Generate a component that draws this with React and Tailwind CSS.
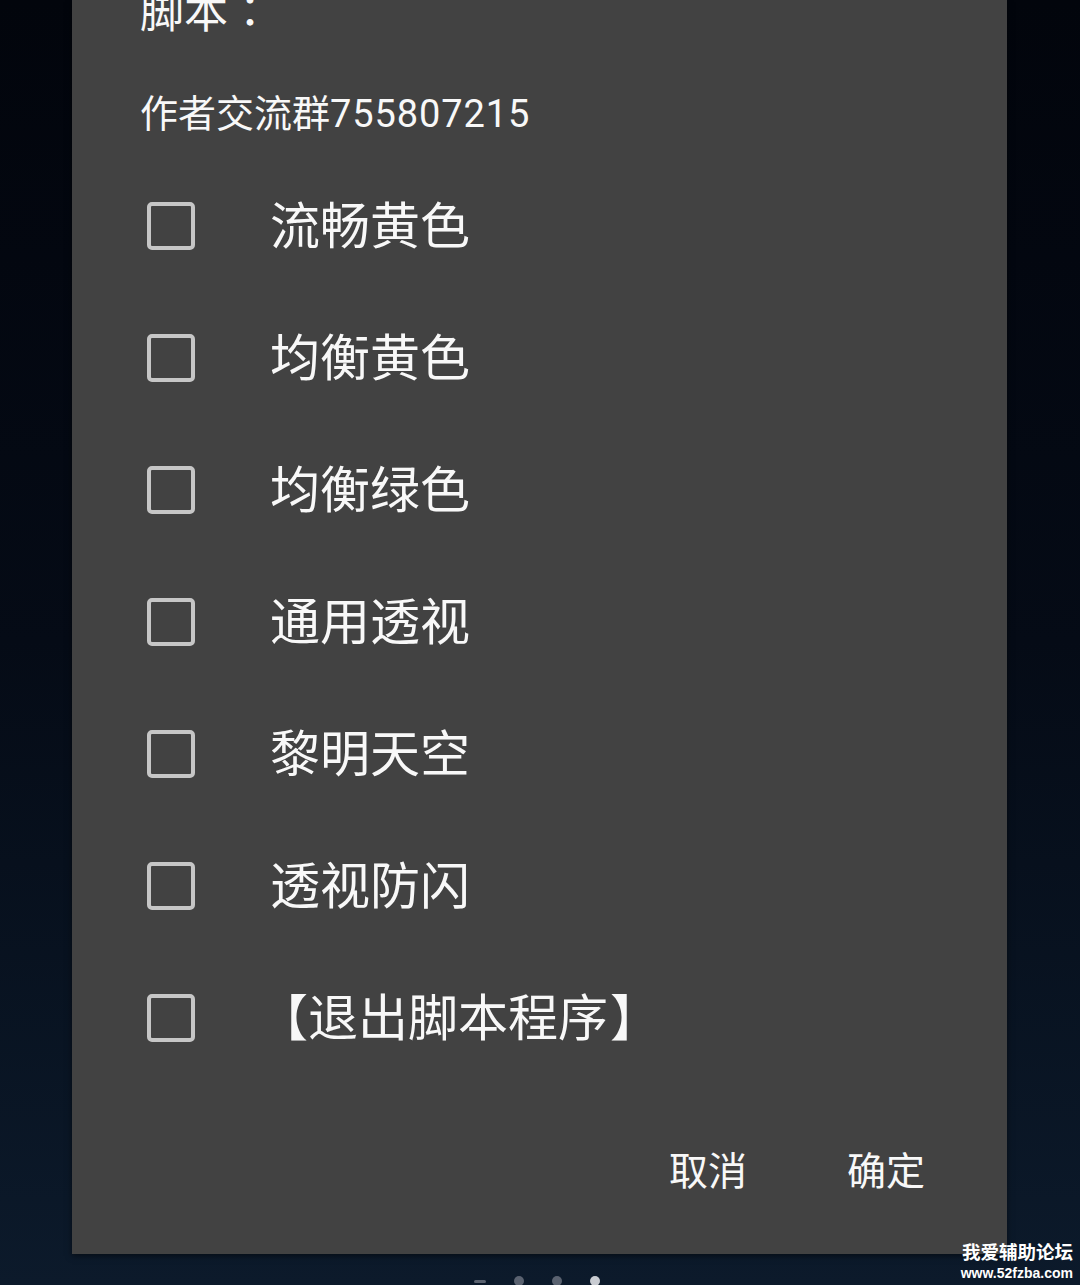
const options = [
  "流畅黄色",
  "均衡黄色",
  "均衡绿色",
  "通用透视",
  "黎明天空",
  "透视防闪",
];

const cjk = { fontFamily: 'Roboto, "Noto Sans CJK SC", "Noto Sans", sans-serif' };

function Row({ children }) {
  return (
    <div className="flex h-[132px] items-center">
      <div className="ml-[7px] h-[48px] w-[48px] rounded-[5px] border-[4px] border-[#c6c6c6]" />
      <span className="ml-[75px] pt-[2px] text-[50px] leading-[50px] text-[#f8f8f8]">{children}</span>
    </div>
  );
}

export default function App() {
  return (
    <div
      className="relative h-[1285px] w-full overflow-hidden bg-linear-to-b from-[#02050c] via-[#050b16] to-[#0c1a2b]"
      style={cjk}
    >
      <div className="ml-[72px] flex h-[1254px] w-[935px] flex-col overflow-hidden bg-[#424242] pl-[68px] shadow-[0_2px_6px_rgba(0,0,0,0.5)]">
        <div className="-mt-[13px] h-[44px] text-[44px] leading-[44px] text-[#f8f8f8]">
          脚本
          <span style={{ fontFamily: '"Noto Sans CJK TC", sans-serif' }}>：</span>
        </div>
        <div className="mt-[64px] h-[38px] text-[38px] leading-[38px] text-[#f8f8f8]">
          作者交流群<span className="tracking-[0.9px]">755807215</span>
        </div>
        <div className="mt-[27px] flex flex-col">
          {options.map((o) => (
            <Row key={o}>{o}</Row>
          ))}
          <Row>
            <span className="-ml-[12px]">【</span>退出脚本程序<span className="ml-[2px]">】</span>
          </Row>
        </div>
        <div className="mt-[69px] flex justify-end gap-[100px] pr-[82px] text-[39px] leading-[39px] text-[#f8f8f8]">
          <span>取消</span>
          <span>确定</span>
        </div>
      </div>

      <div className="mt-[22px] flex items-center justify-center gap-[28px] pr-[6px]">
        <div className="h-[3px] w-[12px] rounded bg-[#5a6270]" />
        <div className="h-[10px] w-[10px] rounded-full bg-[#5a6270]" />
        <div className="h-[10px] w-[10px] rounded-full bg-[#5a6270]" />
        <div className="h-[10px] w-[10px] rounded-full bg-[#c9ccd2]" />
      </div>

      <div className="absolute bottom-[4px] right-[7px] flex flex-col items-end gap-[2px] text-white">
        <span className="text-[18.5px] font-bold leading-[20px]">我爱辅助论坛</span>
        <span
          className="text-[14px] font-bold leading-[16px]"
          style={{ fontFamily: '"Liberation Sans", Arial, sans-serif' }}
        >
          www.52fzba.com
        </span>
      </div>
    </div>
  );
}
